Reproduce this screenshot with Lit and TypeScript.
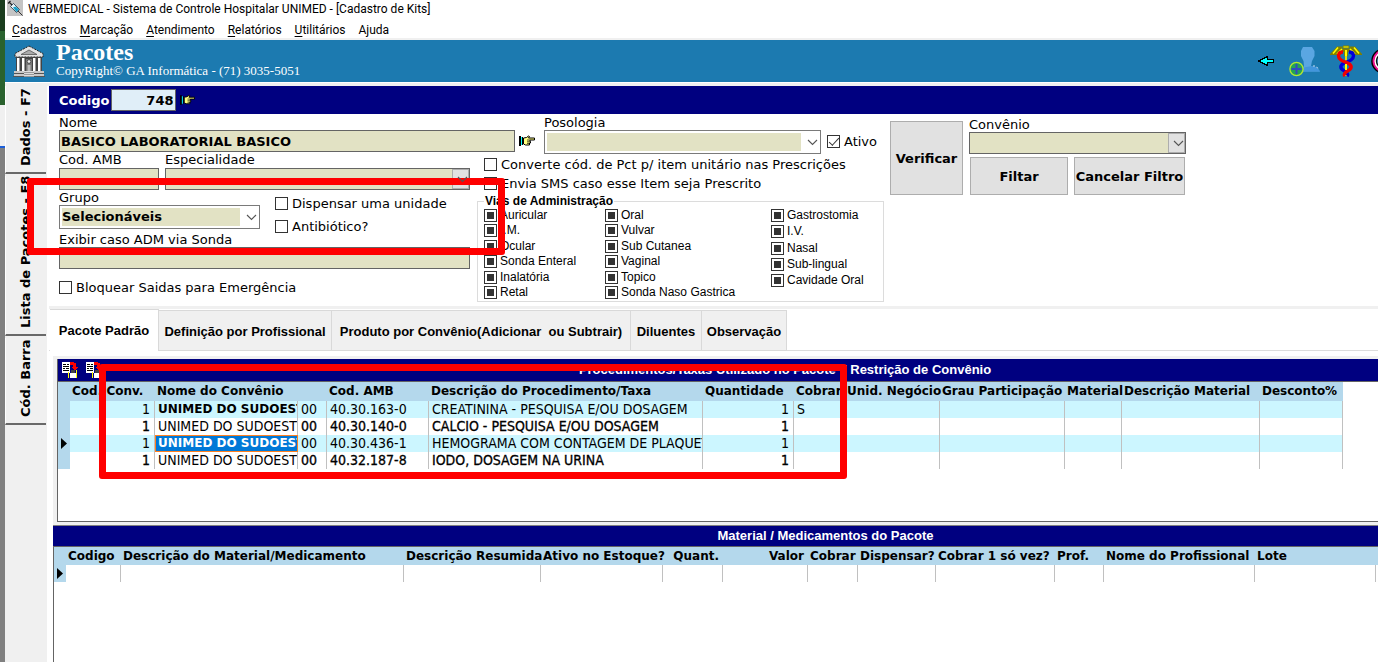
import { LitElement, html, css, nothing } from "lit";
import { customElement } from "lit/decorators.js";
import { classMap } from "lit/directives/class-map.js";

type Col = { label: string; w: number; right?: boolean; plain?: boolean };

const MENU = ["Cadastros", "Marcação", "Atendimento", "Relatórios", "Utilitários"];

const VIAS: string[][] = [
  ["Auricular", "I.M.", "Ocular", "Sonda Enteral", "Inalatória", "Retal"],
  ["Oral", "Vulvar", "Sub Cutanea", "Vaginal", "Topico", "Sonda Naso Gastrica"],
  ["Gastrostomia", "I.V.", "Nasal", "Sub-lingual", "Cavidade Oral"],
];

const TABS = [
  "Pacote Padrão",
  "Definição por Profissional",
  "Produto por Convênio(Adicionar\u00a0 ou Subtrair)",
  "Diluentes",
  "Observação",
];

const PROC_COLS: Col[] = [
  { label: "Cod. Conv.", w: 85 },
  { label: "Nome do Convênio", w: 143 },
  { label: "", w: 29 },
  { label: "Cod. AMB", w: 102 },
  { label: "Descrição do Procedimento/Taxa", w: 274 },
  { label: "Quantidade", w: 91 },
  { label: "Cobrar", w: 51, plain: true },
  { label: "Unid. Negócio", w: 95 },
  { label: "Grau Participação", w: 125 },
  { label: "Material", w: 57 },
  { label: "Descrição Material", w: 138 },
  { label: "Desconto%", w: 83 },
];

const PROC_ROWS = [
  ["1", "UNIMED DO SUDOESTE", "00", "40.30.163-0", "CREATININA - PESQUISA E/OU DOSAGEM", "1", "S"],
  ["1", "UNIMED DO SUDOESTE", "00", "40.30.140-0", "CALCIO - PESQUISA E/OU DOSAGEM", "1", ""],
  ["1", "UNIMED DO SUDOESTE", "00", "40.30.436-1", "HEMOGRAMA COM CONTAGEM DE PLAQUETAS", "1", ""],
  ["1", "UNIMED DO SUDOESTE", "00", "40.32.187-8", "IODO, DOSAGEM NA URINA", "1", ""],
];
const CURRENT_ROW = 2;

const MAT_COLS: Col[] = [
  { label: "Codigo", w: 55 },
  { label: "Descrição do Material/Medicamento", w: 283 },
  { label: "Descrição Resumida", w: 137 },
  { label: "Ativo no Estoque?", w: 122 },
  { label: "Quant.", w: 60, right: true },
  { label: "Valor", w: 85, right: true },
  { label: "Cobrar", w: 50 },
  { label: "Dispensar?", w: 78 },
  { label: "Cobrar 1 só vez?", w: 119 },
  { label: "Prof.", w: 49 },
  { label: "Nome do Profissional", w: 151 },
  { label: "Lote", w: 121 },
];

const INDICATOR_W = 12;
const tableWidth = (cols: Col[]) => cols.reduce((sum, c) => sum + c.w, INDICATOR_W);

const chevron = html`<svg class="chev" width="11" height="7" viewBox="0 0 11 7" aria-hidden="true">
  <path d="M1 1l4.5 4.5L10 1" fill="none" stroke="#555" stroke-width="1.1" />
</svg>`;

const hand = (w: number) => html`<svg width=${w} height="12" viewBox="0 0 16 12" aria-hidden="true">
  <path d="M0 1h2v10H0zM3 2h1v8H3z" fill="#000" />
  <path d="M2 2h1v8H2z" fill="#0ff" />
  <path d="M4.500 3l3-.500 2-1.500 1 .500-1 1.500h6v2h-4.500v1.500h.500v1.500h-1v2H6.500l-2-1z" fill="#ffff80" stroke="#000" stroke-width="1" />
  <path d="M8 5h3M8 6.800h3M8 8.400h2.500" stroke="#000" stroke-width=".7" />
</svg>`;

const syringe = html`<svg class="appicon" width="16" height="16" viewBox="0 0 16 16" aria-hidden="true">
  <rect width="16" height="16" fill="#c4c4c4" />
  <path d="M1 3.5L3.5 1M2.2 2.2L5 5" stroke="#222" stroke-width="1.2" fill="none" />
  <path d="M3.5 6.5L6.5 3.500L12.500 9.500L9.500 12.500z" fill="#e8f6fa" stroke="#234" stroke-width=".8" />
  <path d="M6 7.500L8.500 6.500L12 9.500L9.500 12z" fill="#18a0c8" />
  <path d="M11 11l4.500 4.500" stroke="#333" stroke-width="1" />
</svg>`;

const bank = html`<svg width="34" height="33" viewBox="0 0 34 33" aria-hidden="true">
  <path d="M17 1L31 8.500V12H3V8.500z" fill="#e4e4e4" stroke="#222" stroke-width="1" stroke-dasharray="2 1" />
  <path d="M9 9.500L17 5l8 4.500z" fill="#aaa" stroke="#555" stroke-width=".8" />
  <path d="M4 12h26v15H4z" fill="#444" />
  <path d="M5 13h3v14H5zM10 13h3v14h-3zM21 13h3v14h-3zM26 13h3v14h-3z" fill="#fff" />
  <path d="M7 13h1v14H7zM12 13h1v14h-1zM23 13h1v14h-1zM28 13h1v14h-1z" fill="#999" />
  <path d="M14 14h6v13h-6z" fill="#777" />
  <circle cx="17" cy="16.500" r="1.800" fill="#eee" stroke="#222" stroke-width=".6" />
  <path d="M15.500 20h3v7h-3z" fill="#bbb" />
  <path d="M2 26h11v2.500h8V26h11v6H2z" fill="#c8c8c8" />
  <path d="M1 31.500h11M22 31.500h11M2 28.500h10M22 28.500h10" stroke="#555" />
  <path d="M12 26h10v6H12z" fill="#ddd" />
  <path d="M12 27.500h10M12 29.500h10M12 31.500h10" stroke="#888" stroke-width=".8" />
</svg>`;

const arrow = html`<svg width="16" height="10" viewBox="0 0 16 10" shape-rendering="crispEdges" aria-hidden="true">
  <path d="M0 4h2V3h2V2h2V1h2V0h2v3h6v4h-6v3H8V9H6V8H4V7H2V6H0z" fill="#000" />
  <path d="M3 4h2V3h2V2h2v2h6v2H9v2H7V7H5V6H3z" fill="#0ff" />
</svg>`;

const person = html`<svg width="32" height="32" viewBox="0 0 32 32" aria-hidden="true">
  <path d="M14 2h9l2.500 4v5L23 16l-1 5 6 1.500 3 4H12l3-5.500-.500-5L12 11V6z" fill="#5aa6e2" />
  <path d="M12 23l11-2 5 1.500 3 4H12z" fill="#4296dc" />
  <path d="M24 21h3l3 4" fill="none" stroke="#c8dcf0" stroke-width="1" stroke-dasharray="2 2" />
  <circle cx="7.500" cy="24" r="6.600" fill="#23a455" stroke="#b4e632" stroke-width="1.300" />
  <path d="M7.500 19v10M2.500 24h10" stroke="#3448c0" stroke-width="2" />
</svg>`;

const caduceus = html`<svg width="32" height="32" viewBox="0 0 32 32" aria-hidden="true">
  <path d="M0 9L7 1.500h5v2h8v-2h5L32 9v1h-8l-4-3h-2v4h-4V7h-2l-4 3H0z" fill="#808000" />
  <path d="M3 8.500l5-6M7 9l5-5M29 8.500l-5-6M25 9l-5-5" stroke="#ff0" stroke-width="1.500" />
  <path d="M13 1h6v2h-6z" fill="#ff0" stroke="#808000" />
  <path d="M16 5v26" stroke="#e8e000" stroke-width="2" />
  <path d="M19 7c5 0 6 5 2 8s-9 2-10 6 3 4 5 6 2 3 1 4" fill="none" stroke="#0000d8" stroke-width="3.400" />
  <path d="M13 7c-5 0-6 5-2 8s9 2 10 6-3 4-5 6-2 3-1 4" fill="none" stroke="#f00000" stroke-width="3.400" />
  <path d="M16 5v6M16 19v6" stroke="#ff0" stroke-width="2" />
</svg>`;

const badge = html`<svg width="27" height="26" viewBox="0 0 27 26" aria-hidden="true">
  <circle cx="13" cy="13" r="11.500" fill="#fff" stroke="#000" stroke-width="2.600" />
  <circle cx="13" cy="13" r="10.500" fill="none" stroke="#f01090" stroke-width="1.800" />
  <circle cx="13" cy="13" r="7.500" fill="#58b0d8" stroke="#111" stroke-width="1.400" />
</svg>`;

const paste = html`<svg width="17" height="16" viewBox="0 0 17 16" shape-rendering="crispEdges" aria-hidden="true">
  <path d="M0 0h8v11H0z" fill="#fff" />
  <path d="M1 2h3v1H1zM5 2h2v1H5zM1 4h6v1H1zM1 6h2v1H1zM4 6h3v1H4zM1 8h6v1H1z" fill="#000" />
  <path d="M6 10h1v6H6zM14 8h1v8h-1z" fill="#ff0" />
  <path d="M8 11h6v5H8z" fill="#fff" />
  <path d="M9 8h4v3H9z" fill="#444" />
  <path d="M8 0h4v1h2v4h2L12.500 8.500 9 5h2V3H8z" fill="#f00" />
</svg>`;

@customElement("app-root")
export class AppRoot extends LitElement {
  static styles = css`
    :host {
      display: block;
      position: relative;
      height: 100vh;
      overflow: hidden;
      background: #fff;
      color: #000;
      font: 13px/15px "DejaVu Sans", Verdana, sans-serif;
    }
    * { box-sizing: border-box; }
    .shell { display: grid; grid-template-columns: 5px minmax(0, 1fr); height: 100%; }
    .backdrop {
      background: linear-gradient(#1a3d1e 31px, #2a622e 31px 105px, #f0f0f0 105px 146px, #1c5fd8 146px 148px, #808080 148px);
    }
    .window { display: flex; flex-direction: column; min-height: 0; }
    .title, .menu { font: 12px/20px Roboto, "Segoe UI", sans-serif; display: flex; }
    .title { height: 18px; gap: 5px; padding-left: 2px; line-height: 18px; }
    .menu { height: 22px; gap: 13px; padding-left: 7px; border-bottom: 2px solid #f0f0f0; line-height: 24px; }
    .menu a { color: inherit; text-decoration: none; }
    .menu u { text-underline-offset: 2px; }
    .banner {
      display: flex; align-items: center; height: 42px; padding-left: 7px; gap: 10px;
      background: #1c7ab0; color: #fff; font-family: "Liberation Serif", "Times New Roman", serif; overflow: hidden;
    }
    .brand { padding-bottom: 4px; }
    .banner h1 { margin: 0; font-size: 24px; line-height: 24px; }
    .banner p { margin: 0; font-size: 13px; line-height: 14px; }
    .tools { margin-left: auto; display: flex; align-items: center; gap: 9px; flex: none; }
    .tools svg { flex: none; }
    .tools :first-child { margin-right: 6px; }
    .tools :last-child { margin-right: -20px; }
    .main { flex: 1; min-height: 0; display: grid; grid-template-columns: 44px minmax(0, 1fr); background: #f0f0f0; padding-top: 3px; border-top: 1px solid #fff; }
    .side { display: flex; flex-direction: column; align-items: flex-start; gap: 2px; border-right: 2px solid #fff; }
    .side button {
      writing-mode: vertical-rl; transform: rotate(180deg); width: 41px; border: 0; border-top: 2px solid #696969;
      border-right: 1px solid #fff; background: #f0f0f0; font: bold 13px/16px "DejaVu Sans", Verdana, sans-serif; padding: 6px 0; text-align: left; color: #000;
      white-space: nowrap;
    }
    .side .dados { height: 88px; }
    .side .lista { height: 160px; }
    .side .barra { height: 87px; }
    .content { display: flex; flex-direction: column; min-width: 0; min-height: 0; background: #fff; }
    .codebar { display: flex; align-items: center; height: 28px; background: #000080; padding-left: 10px; color: #fff; font-weight: bold; gap: 2px; flex: none; }
    .codebar input { width: 65px; height: 22px; background: #e0eef8; text-align: right; font-weight: bold; padding: 0 2px; }
    .codebar svg { margin-left: 2px; }
    input.text { border: 1px solid #646464; font: bold 13px/15px "DejaVu Sans", Verdana, sans-serif; color: #000; border-radius: 0; }
    .form { display: flex; align-items: flex-start; gap: 6px; padding: 1px 10px 5px; height: 192px; flex: none; }
    .left { width: 825px; flex: none; }
    .field { display: flex; flex-direction: column; }
    .field input { height: 22px; background: #e2e2c4; width: 100%; padding: 0 1px; }
    .row { display: flex; align-items: flex-end; }
    .nome { width: 456px; }
    .toprow { align-items: flex-start; height: 37px; }
    .toprow .gap { width: 29px; padding-left: 4px; height: 16px; margin-top: 20px; }
    .toprow .check { margin: 19px 0 0 6px; }
    .posologia { width: 277px; }
    .sel { display: grid; align-items: center; }
    .sel > * { grid-area: 1 / 1; }
    .sel select {
      appearance: none; width: 100%; height: 24px; border: 1px solid #7a7a7a; border-radius: 0; padding: 2px 19px 2px 2px;
      font: bold 13px/18px "DejaVu Sans", Verdana, sans-serif; color: #000; background: linear-gradient(#e2e2c4, #e2e2c4) content-box #fff;
    }
    .sel .chev { justify-self: end; margin-right: 3px; pointer-events: none; z-index: 1; }
    .sel.flat select { height: 22px; border-color: #646464; background: #e2e2c4; }
    .sel.flat .drop {
      justify-self: end; width: 17px; height: 20px; margin-right: 1px; background: #e1e1e1; border: 1px solid #adadad;
      display: grid; place-items: center; pointer-events: none;
    }
    .sel.flat .chev { margin: 0; }
    .lower { display: flex; gap: 7px; }
    .lcol { width: 411px; flex: none; }
    .mcol { width: 407px; flex: none; }
    .codrow { gap: 6px; height: 38px; }
    .codrow .field { gap: 1px; }
    .codrow .field:first-child { width: 100px; }
    .codrow .field:last-child { flex: 1; }
    .grouprow { gap: 15px; height: 39px; align-items: flex-end; }
    .grouprow > .field { width: 201px; }
    .pair { display: flex; flex-direction: column; gap: 8px; padding-bottom: 1px; height: 39px; justify-content: flex-end; }
    .pair .check:last-child { margin-bottom: -6px; }
    .exibir { margin-top: 3px; }
    .check { display: flex; align-items: center; gap: 4px; white-space: nowrap; }
    .check input {
      appearance: none; width: 13px; height: 13px; margin: 0; border: 1px solid #333; background: #fff; flex: none; display: grid; place-items: center;
    }
    .ativo input:checked::after {
      content: ""; width: 9px; height: 4px; border-left: 1px solid #333; border-bottom: 1px solid #333; transform: translateY(-1px) rotate(-47deg);
    }
    .vias input:checked::after { content: ""; width: 7px; height: 7px; background: #333; }
    .bloquear { margin-top: 11px; }
    .mchecks { display: flex; flex-direction: column; gap: 4px; padding: 5px 0 3px 7px; }
    .vias {
      margin: 0; border: 1px solid #dcdcdc; padding: 0 6px 2px; font: 12px/13px "Liberation Sans", Arial, sans-serif; display: grid;
      grid-template-columns: 121px 166px 1fr; align-items: start; min-width: 0;
    }
    .vias legend { font-weight: bold; padding: 0 1px; line-height: 15px; }
    .vias .check { gap: 3px; }
    .via { display: flex; flex-direction: column; justify-content: space-between; height: 90px; }
    .via:last-child { height: 78px; }
    .actions { display: grid; grid-template-columns: 73px 217px; gap: 6px; padding-top: 6px; }
    .actions button {
      font: bold 13px/15px "DejaVu Sans", Verdana, sans-serif; background: #e1e1e1; border: 1px solid #adadad; padding: 0; color: #000; white-space: nowrap;
    }
    .verificar { height: 74px; }
    .btns { display: grid; grid-template-columns: 98px 111px; gap: 6px; margin-top: 3px; padding-left: 1px; }
    .btns button { height: 38px; }
    .conv { margin-top: -4px; }
    .tabs {
      display: flex; align-items: flex-end; height: 45px; border-top: 3px solid #f0f0f0; padding-left: 1px; flex: none;
      box-shadow: inset 0 -1px #dcdcdc;
    }
    .tabs button {
      height: 41px; border: 1px solid #d9d9d9; border-left: 0; background: #f0f0f0; font: bold 13px/16px "Liberation Sans", Arial, sans-serif; padding: 3px 0 0; color: #000;
      white-space: nowrap;
    }
    .tabs button.on { width: 109px; height: 42px; background: #fff; border-bottom: 0; padding: 0; }
    .tabs .t1 { width: 173px; }
    .tabs .t2 { width: 299px; }
    .tabs .t3 { width: 71px; }
    .tabs .t4 { width: 85px; }
    .panel { margin: 5px 0 0 4px; border-left: 4px solid #f0f0f0; border-top: 3px solid #f0f0f0; border-bottom: 3px solid #f0f0f0; flex: none; }
    .frame { height: 163px; border-bottom: 1px solid #646464; border-left: 1px solid #646464; overflow: hidden; }
    .bar {
      display: grid; align-items: center; height: 23px; background: #000080; border-bottom: 1px solid #646464; color: #fff;
      font: bold 13px/16px "Liberation Sans", Arial, sans-serif; text-align: center;
    }
    .bar > * { grid-area: 1 / 1; }
    .bar .icons { display: flex; gap: 7px; padding-left: 4px; }
    .bar h2 { margin: 0; font-size: 13px; padding-left: 220px; white-space: nowrap; }
    .bar h2.shift { padding-left: 134px; }
    .lowgrid { margin-left: 4px; flex: 1; min-height: 0; border-top: 1px solid #808080; overflow: hidden; }
    .lowgrid .bar { height: 21px; }
    .lowgrid .body { border-left: 1px solid #646464; height: 100%; }
    table { border-collapse: separate; border-spacing: 0; table-layout: fixed; }
    .full { min-width: 100%; }
    th {
      background: #b4d8ec; font: bold 12px/18px "DejaVu Sans", Tahoma, sans-serif; padding: 0 0 0 2px; text-align: left; white-space: nowrap; height: 18px;
    }
    th.r, td.r { text-align: right; padding-right: 4px; }
    td {
      height: 17px; font: 14px/17px "DejaVu Sans Condensed", Tahoma, sans-serif; padding: 0 0 0 3px; white-space: nowrap; overflow: hidden; border-right: 1px solid #c0c0c0;
    }
    .proc th { height: 19px; line-height: 19px; }
    .proc tr.odd td { background: #ccf6ff; }
    .proc tr.even td.code { -webkit-text-stroke: 0.3px #000; }
    td.none { border-right: 0; }
    td.b { font: bold 12px/17px "DejaVu Sans", Tahoma, sans-serif; }
    .proc tr td.ind, td.ind { background: #b4d8ec; border: 0; padding: 0 0 0 3px; }
    .ind svg { display: block; }
    .proc tr td.sel-cell { background: #0078d7; color: #fff; outline: 1px solid #ff8020; outline-offset: -1px; }
    .mark { position: absolute; border: 7px solid #f00; border-radius: 3px; pointer-events: none; }
    .mark-group { left: 27px; top: 178px; width: 478px; height: 77px; }
    .mark-grid { left: 99px; top: 364px; width: 748px; height: 115px; }
  `;

  private check(label: string, on = false, cls = "") {
    return html`<label class="check ${cls}"><input type="checkbox" .checked=${on} />${label}</label>`;
  }

  private cols(cols: Col[], full = false) {
    return html`<colgroup>
      <col style="width:${INDICATOR_W}px" />
      ${cols.map((c) => html`<col style="width:${c.w}px" />`)}
      ${full ? html`<col />` : nothing}
    </colgroup>`;
  }

  private pointer() {
    return html`<svg width="6" height="11" viewBox="0 0 6 11" aria-hidden="true"><path d="M0 0l6 5.500L0 11z" fill="#000" /></svg>`;
  }

  private procRow(r: string[], i: number) {
    const cells = PROC_COLS.map((c, k) => {
      const cls = {
        r: k === 0 || k === 5,
        b: k === 1 && i % 2 === 0,
        "sel-cell": k === 1 && i === CURRENT_ROW,
        none: c.plain === true,
        code: k !== 1,
      };
      return html`<td class=${classMap(cls)}>${r[k] ?? ""}</td>`;
    });
    return html`<tr class=${i % 2 ? "even" : "odd"}><td class="ind">${i === CURRENT_ROW ? this.pointer() : nothing}</td>${cells}</tr>`;
  }

  render() {
    return html`
      <div class="shell">
        <div class="backdrop"></div>
        <div class="window">
          <div class="title">${syringe}<span>WEBMEDICAL - Sistema de Controle Hospitalar UNIMED - [Cadastro de Kits]</span></div>
          <nav class="menu">
            ${MENU.map((m) => html`<a href="#"><u>${m[0]}</u>${m.slice(1)}</a>`)}
            <a href="#">Ajuda</a>
          </nav>
          <header class="banner">
            ${bank}
            <div class="brand"><h1>Pacotes</h1><p>CopyRight© GA Informática - (71) 3035-5051</p></div>
            <div class="tools">${arrow}${person}${caduceus}${badge}</div>
          </header>
          <div class="main">
            <div class="side">
              <button class="dados">Dados - F7</button>
              <button class="lista">Lista de Pacotes - F8</button>
              <button class="barra">Cód. Barra</button>
            </div>
            <div class="content">
              <div class="codebar"><label for="codigo">Codigo</label><input id="codigo" class="text" .value=${"748"} />${hand(15)}</div>
              <div class="form">
                <div class="left">
                  <div class="row toprow">
                    <div class="field nome"><label for="nome">Nome</label><input id="nome" class="text" .value=${"BASICO LABORATORIAL BASICO"} /></div>
                    <div class="gap">${hand(16)}</div>
                    <div class="field posologia"><label for="pos">Posologia</label>
                      <div class="sel"><select id="pos"><option></option></select>${chevron}</div></div>
                    ${this.check("Ativo", true, "ativo")}
                  </div>
                  <div class="lower">
                    <div class="lcol">
                      <div class="row codrow">
                        <div class="field"><label for="amb">Cod. AMB</label><input id="amb" class="text" /></div>
                        <div class="field"><label for="esp">Especialidade</label>
                          <div class="sel flat"><select id="esp"><option></option></select><span class="drop">${chevron}</span></div></div>
                      </div>
                      <div class="row grouprow">
                        <div class="field"><label for="grupo">Grupo</label>
                          <div class="sel"><select id="grupo"><option>Selecionáveis</option></select>${chevron}</div></div>
                        <div class="pair">${this.check("Dispensar uma unidade")}${this.check("Antibiótico?")}</div>
                      </div>
                      <div class="field exibir"><label for="sonda">Exibir caso ADM via Sonda</label><input id="sonda" class="text" /></div>
                      ${this.check("Bloquear Saidas para Emergência", false, "bloquear")}
                    </div>
                    <div class="mcol">
                      <div class="mchecks">
                        ${this.check("Converte cód. de Pct p/ item unitário nas Prescrições")}
                        ${this.check("Envia SMS caso esse Item seja Prescrito")}
                      </div>
                      <fieldset class="vias"><legend>Vias de Administração</legend>
                        ${VIAS.map((g) => html`<div class="via">${g.map((v) => this.check(v, true))}</div>`)}
                      </fieldset>
                    </div>
                  </div>
                </div>
                <div class="actions">
                  <button class="verificar">Verificar</button>
                  <div>
                    <div class="field conv"><label for="conv">Convênio</label>
                      <div class="sel flat"><select id="conv"><option></option></select><span class="drop">${chevron}</span></div></div>
                    <div class="btns"><button>Filtar</button><button>Cancelar Filtro</button></div>
                  </div>
                </div>
              </div>
              <div class="tabs">${TABS.map((t, i) => html`<button class=${i ? "t" + i : "on"}>${t}</button>`)}</div>
              <div class="panel">
                <div class="frame">
                  <div class="bar"><div class="icons">${paste}${paste}</div>
                    <h2 class="shift">Procedimentos/Taxas Utilizado no Pacote&nbsp; / Restrição de Convênio</h2></div>
                  <table class="proc" style="width:${tableWidth(PROC_COLS)}px">
                    ${this.cols(PROC_COLS)}
                    <thead><tr><th></th>${PROC_COLS.map((c) => html`<th>${c.label}</th>`)}</tr></thead>
                    <tbody>${PROC_ROWS.map((r, i) => this.procRow(r, i))}</tbody>
                  </table>
                </div>
              </div>
              <div class="lowgrid">
                <div class="bar"><h2>Material / Medicamentos do Pacote</h2></div>
                <div class="body">
                  <table class="full" style="width:${tableWidth(MAT_COLS)}px">
                    ${this.cols(MAT_COLS, true)}
                    <thead><tr><th></th>${MAT_COLS.map((c) => html`<th class=${c.right ? "r" : ""}>${c.label}</th>`)}<th></th></tr></thead>
                    <tbody><tr><td class="ind">${this.pointer()}</td>${MAT_COLS.map(() => html`<td></td>`)}<td class="none"></td></tr></tbody>
                  </table>
                </div>
              </div>
            </div>
          </div>
        </div>
      </div>
      <div class="mark mark-group"></div>
      <div class="mark mark-grid"></div>
    `;
  }
}
